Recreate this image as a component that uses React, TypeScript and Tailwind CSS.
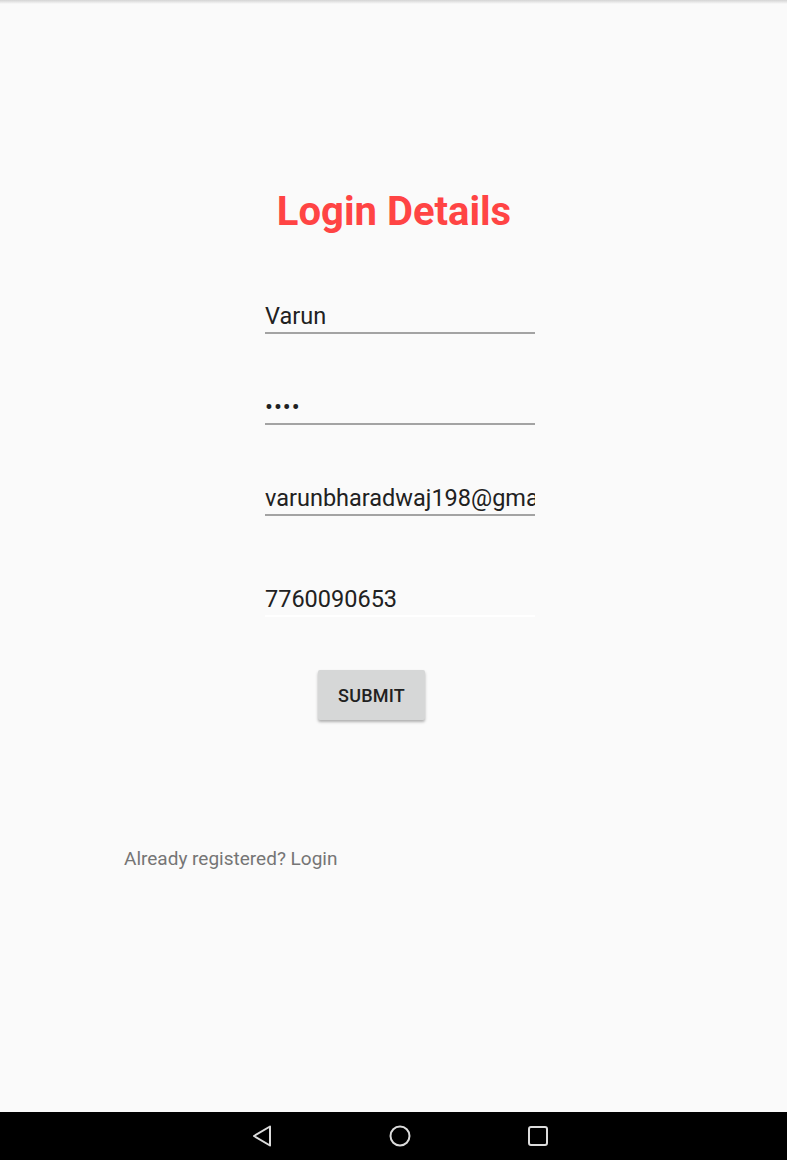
import React from 'react';

const fieldText = "text-[23.5px] leading-[28px] text-[#212121] pb-[2px]";

const LoginDetails: React.FC = () => {
  return (
    <div
      className="w-[787px] h-[1160px] bg-[#fafafa] flex flex-col overflow-hidden"
      style={{ fontFamily: 'Roboto, "Noto Sans", sans-serif' }}
    >
      {/* status shadow */}
      <div className="h-[4px] bg-gradient-to-b from-[#d4d4d4] to-[#fafafa]"></div>

      <div className="flex-1 flex flex-col">
        {/* Title */}
        <h1 className="mt-[182px] text-center text-[40px] leading-[52px] font-bold text-[#ff4444] pl-[1px]">
          Login Details
        </h1>

        {/* Fields */}
        <div className="ml-[265px] w-[270px] mt-[64px] flex flex-col">
          <div className={`${fieldText} border-b-2 border-[#a3a3a3]`}>Varun</div>
          <div className={`${fieldText} mt-[59px] border-b-2 border-[#a3a3a3]`}>
            <span className="tracking-[1px]">••••</span>
          </div>
          <div className={`${fieldText} mt-[59px] border-b-2 border-[#a3a3a3] whitespace-nowrap overflow-hidden`}>
            varunbharadwaj198@gmail.com
          </div>
          <div className={`${fieldText} mt-[69px] border-b-2 border-[#ffffff]`}>7760090653</div>
        </div>

        {/* Submit */}
        <div className="ml-[318px] mt-[53px]">
          <button className="w-[107px] h-[50px] bg-[#d6d7d7] rounded-[2px] shadow-[0_2px_3px_rgba(0,0,0,0.3)] text-[18px] font-medium text-[#212121] tracking-[0.2px]">
            SUBMIT
          </button>
        </div>

        {/* Login link */}
        <div className="ml-[124px] mt-[127px] text-[19px] leading-[24px] text-[#757575]">
          Already registered? Login
        </div>
      </div>

      {/* Nav bar */}
      <div className="h-[48px] bg-black flex items-center justify-center">
        <div className="flex items-center gap-[115px] pl-[13px]">
          <svg width="22" height="24" viewBox="0 0 22 24" fill="none">
            <path d="M19 2.5 L3 12 L19 21.5 Z" stroke="#dcdcdc" strokeWidth="2" strokeLinejoin="round" />
          </svg>
          <svg width="24" height="24" viewBox="0 0 24 24" fill="none">
            <circle cx="12" cy="12" r="9.5" stroke="#dcdcdc" strokeWidth="2" />
          </svg>
          <svg width="22" height="22" viewBox="0 0 22 22" fill="none">
            <rect x="2" y="2" width="18" height="18" rx="2" stroke="#dcdcdc" strokeWidth="2" />
          </svg>
        </div>
      </div>
    </div>
  );
};

export default function App() {
  return <LoginDetails />;
}
